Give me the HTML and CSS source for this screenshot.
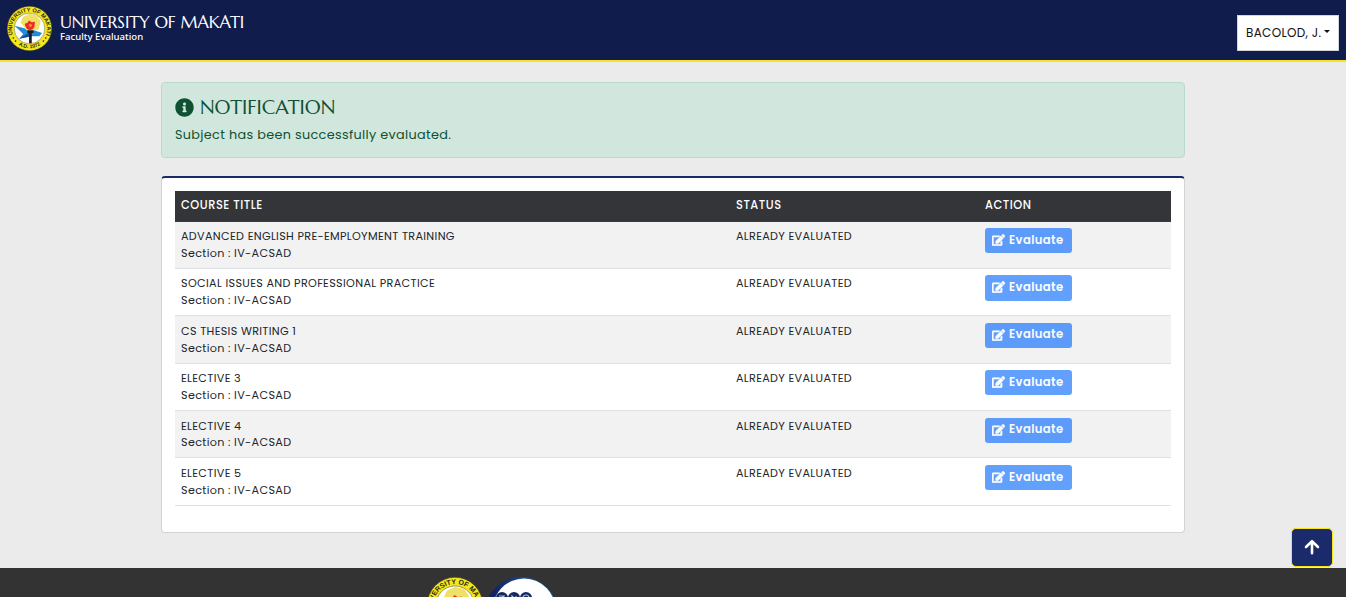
FILE: index.html
```
<!DOCTYPE html>
<html lang="en">
<head>
<meta charset="utf-8">
<title>Faculty Evaluation</title>
<link rel="stylesheet" href="styles.css">
</head>
<body>
<svg class="defs" width="0" height="0">
  <defs>
    <symbol id="seal" viewBox="0 0 100 100">
      <circle cx="50" cy="50" r="49.5" fill="#f4e71e" stroke="#3b3a20" stroke-width="1"/>
      <circle cx="50" cy="50" r="34" fill="#fff" stroke="#55511c" stroke-width="1"/>
      <path d="M30 36L36 24L50 18L66 21L75 34L70 52L47 58Z" fill="#f0e068"/>
      <path d="M17 44L40 50L50 60L60 54L78 60L72 67L54 67L27 73L36 62Z" fill="#218bd3"/>
      <path d="M27 73L54 56L54 67Z" fill="#124b9b"/>
      <path d="M41 45Q37 38 45 38L49 32L55 36L62 35L61 46Q58 54 52 53Q44 54 41 45Z" fill="#ee2b23"/>
      <circle cx="52" cy="43" r="3.500" fill="#f58a35"/>
      <path d="M45 54H59V60H55V83H49V60H45Z" fill="#171c22"/>
      <path id="sealTop" d="M13 64A39 39 0 1 1 87 64" fill="none"/>
      <path id="sealBottom" d="M20 82A44 44 0 0 0 80 82" fill="none"/>
      <text class="seal-text"><textPath href="#sealTop" textLength="148">UNIVERSITY OF MAKATI</textPath></text>
      <text class="seal-text seal-year" text-anchor="middle"><textPath href="#sealBottom" startOffset="50%">A.D. 1972</textPath></text>
      <circle cx="14" cy="71" r="1.8" fill="#222"/><circle cx="19" cy="78" r="1.8" fill="#222"/>
      <circle cx="86" cy="71" r="1.8" fill="#222"/><circle cx="81" cy="78" r="1.8" fill="#222"/>
    </symbol>
    <symbol id="edit" viewBox="0 0 576 512">
      <path fill="currentColor" stroke="currentColor" stroke-width="22" d="M402.600 83.200l90.200 90.200c3.800 3.800 3.800 10 0 13.800L274.400 405.600l-92.800 10.300c-12.400 1.400-22.900-9.100-21.500-21.500l10.300-92.800L388.800 83.200c3.800-3.800 10-3.800 13.800 0zm162-22.900l-48.800-48.800c-15.200-15.200-39.900-15.200-55.200 0l-35.400 35.400c-3.800 3.800-3.800 10 0 13.800l90.200 90.200c3.800 3.800 10 3.800 13.800 0l35.400-35.400c15.200-15.300 15.200-40 0-55.200zM384 346.200V448H64V128h229.800c3.200 0 6.200-1.300 8.500-3.500l40-40c7.600-7.600 2.200-20.500-8.500-20.500H48C21.500 64 0 85.500 0 112v352c0 26.500 21.500 48 48 48h352c26.500 0 48-21.500 48-48V306.200c0-10.700-12.900-16-20.500-8.500l-40 40c-2.200 2.300-3.500 5.300-3.500 8.500z"/>
    </symbol>
  </defs>
</svg>

<header class="topbar">
  <a class="brand">
    <svg class="brand-logo"><use href="#seal"/></svg>
    <span class="brand-text">
      <span class="brand-name">UNIVERSITY OF MAKATI</span>
      <span class="brand-sub">Faculty Evaluation</span>
    </span>
  </a>
  <button class="user-menu"><span>BACOLOD, J.</span><i class="caret"></i></button>
</header>

<main class="content">
  <section class="alert">
    <h1 class="alert-title">
      <svg class="alert-icon" viewBox="0 0 512 512"><path fill="currentColor" d="M256 8C119 8 8 119.100 8 256c0 137 111 248 248 248s248-111 248-248C504 119.100 393 8 256 8zm0 110c23.200 0 42 18.800 42 42s-18.800 42-42 42-42-18.800-42-42 18.800-42 42-42zm56 254c0 6.600-5.400 12-12 12h-88c-6.600 0-12-5.400-12-12v-24c0-6.600 5.400-12 12-12h12v-64h-12c-6.600 0-12-5.400-12-12v-24c0-6.600 5.400-12 12-12h64c6.600 0 12 5.400 12 12v100h12c6.600 0 12 5.400 12 12v24z"/></svg>
      <span>NOTIFICATION</span>
    </h1>
    <p class="alert-message">Subject has been successfully evaluated.</p>
  </section>

  <section class="card">
    <div class="row row-head"><span>COURSE TITLE</span><span>STATUS</span><span>ACTION</span></div>
    <div class="row"><div><div>ADVANCED ENGLISH PRE-EMPLOYMENT TRAINING</div><div>Section : IV-ACSAD</div></div><div>ALREADY EVALUATED</div><div><button class="evaluate"><svg><use href="#edit"/></svg><span>Evaluate</span></button></div></div>
    <div class="row"><div><div>SOCIAL ISSUES AND PROFESSIONAL PRACTICE</div><div>Section : IV-ACSAD</div></div><div>ALREADY EVALUATED</div><div><button class="evaluate"><svg><use href="#edit"/></svg><span>Evaluate</span></button></div></div>
    <div class="row"><div><div>CS THESIS WRITING 1</div><div>Section : IV-ACSAD</div></div><div>ALREADY EVALUATED</div><div><button class="evaluate"><svg><use href="#edit"/></svg><span>Evaluate</span></button></div></div>
    <div class="row"><div><div>ELECTIVE 3</div><div>Section : IV-ACSAD</div></div><div>ALREADY EVALUATED</div><div><button class="evaluate"><svg><use href="#edit"/></svg><span>Evaluate</span></button></div></div>
    <div class="row"><div><div>ELECTIVE 4</div><div>Section : IV-ACSAD</div></div><div>ALREADY EVALUATED</div><div><button class="evaluate"><svg><use href="#edit"/></svg><span>Evaluate</span></button></div></div>
    <div class="row"><div><div>ELECTIVE 5</div><div>Section : IV-ACSAD</div></div><div>ALREADY EVALUATED</div><div><button class="evaluate"><svg><use href="#edit"/></svg><span>Evaluate</span></button></div></div>
  </section>
</main>

<footer class="footer">
  <svg class="footer-seal"><use href="#seal"/></svg>
  <svg class="footer-badge" viewBox="0 0 72 72">
    <defs><linearGradient id="rim"><stop offset="0" stop-color="#101d55"/><stop offset=".45" stop-color="#1b3c83"/><stop offset="1" stop-color="#38a1e4"/></linearGradient></defs>
    <circle cx="36" cy="36" r="36" fill="url(#rim)"/>
    <ellipse cx="39" cy="35" rx="32" ry="33.500" fill="#fff"/>
    <g fill="#17275f"><circle cx="17" cy="21" r="6"/><circle cx="29" cy="21" r="6"/><circle cx="41" cy="21" r="6"/></g>
    <g fill="none" stroke="#b8c3dc" stroke-width="1.200"><path d="M14 19h5l-3 3M27 23v-4l4 4v-4"/><circle cx="41" cy="21" r="3"/></g>
  </svg>
</footer>

<button class="to-top" aria-label="Back to top">
  <svg viewBox="0 0 16 16"><path d="M8 14.200V2.500M2 8L8 2.200L14 8" fill="none" stroke="#fff" stroke-width="2.600" stroke-linecap="round" stroke-linejoin="round"/></svg>
</button>
</body>
</html>
```
FILE: styles.css
```
* { box-sizing: border-box; }
html, body { height: 100%; }
body {
  margin: 0;
  overflow: hidden;
  background: #ebebeb;
  color: #212529;
  font-family: Poppins, Inter, "Open Sans", sans-serif;
  font-size: 11.2px;
  letter-spacing: .33px;
}
button { font-family: inherit; margin: 0; letter-spacing: inherit; }
.defs { position: absolute; }
.seal-text { font: bold 12.5px "Liberation Sans", sans-serif; letter-spacing: 0; fill: #2c2b18; }
.seal-year { font-size: 11.5px; }

.topbar {
  display: flex;
  justify-content: space-between;
  height: 62px;
  padding: 6px 7px 0;
  background: #101c4c;
  border-bottom: 2px solid #f6e51d;
}
.brand { display: flex; gap: 8px; }
.brand-logo { width: 45px; height: 45px; }
.brand-text { display: flex; flex-direction: column; padding-top: 7px; color: #fff; white-space: nowrap; }
.brand-name { font: 16.8px/20px Marcellus, Lato, sans-serif; letter-spacing: -.1px; }
.brand-sub { font: 500 9.6px/8px "Noto Sans", sans-serif; letter-spacing: 0; }
.user-menu {
  display: flex;
  align-items: center;
  gap: 3px;
  width: 102px;
  height: 36px;
  margin-top: 9px;
  padding: 0 0 0 8px;
  background: #fff;
  border: 1px solid #d3d4d5;
  color: #111;
  font-size: 12px;
  white-space: nowrap;
}
.caret { margin-bottom: 3px; border: 3px solid transparent; border-top-color: #111; border-bottom: 0; }

.content { width: 1024px; height: 506px; margin: 0 auto; padding-top: 20px; }
.alert {
  height: 76px;
  padding: 13px 13px 0;
  background: #d1e7dd;
  border: 1px solid #badbcc;
  border-radius: 4px;
  color: #0f5132;
}
.alert-title {
  display: flex;
  align-items: center;
  gap: 6px;
  height: 22px;
  margin: 0 0 7px;
  font: 19.8px/22px Marcellus, Lato, sans-serif;
  letter-spacing: 0;
}
.alert-title span { padding-top: 2px; }
.alert-icon { width: 19px; height: 19px; }
.alert-message { margin: 0; font-size: 12.8px; line-height: 20px; letter-spacing: .33px; }

.card {
  height: 357px;
  margin-top: 18px;
  padding: 13px 13px 0;
  background: #fff;
  border: 1px solid #d3d3d3;
  border-top: 2px solid #1b2a6b;
  border-radius: 4px;
}
.row {
  display: grid;
  grid-template-columns: 555px 249px 1fr;
  height: 47.4px;
  padding: 6.5px 6px 0;
  border-bottom: 1px solid #dee2e6;
  line-height: 16.8px;
  white-space: nowrap;
}
.row:nth-child(even) { background: #f2f2f2; }
.row-head {
  height: 30.5px;
  padding-top: 5.6px;
  background: #343539;
  border-bottom-color: #3c3d41;
  color: #fff;
  font-size: 11.4px;
  font-weight: 500;
  letter-spacing: .53px;
}
.evaluate {
  display: flex;
  align-items: center;
  gap: 4px;
  width: 87px;
  height: 25.2px;
  padding: 0 0 1px 7px;
  background: #0d6efd;
  border: 0;
  border-radius: 3px;
  color: #fff;
  font-size: 11.6px;
  font-weight: 600;
  letter-spacing: .4px;
  opacity: .65;
}
.evaluate svg { width: 13px; height: 12px; overflow: visible; }

.footer { display: flex; gap: 4px; height: 29px; padding: 9px 0 0 427px; background: #333; overflow: hidden; }
.footer-seal { flex: none; width: 56px; height: 56px; }
.footer-badge { flex: none; width: 72px; height: 72px; margin-left: -2px; }
.to-top {
  position: absolute;
  right: 13px;
  bottom: 30px;
  display: grid;
  place-items: center;
  width: 42px;
  height: 39px;
  padding: 0 0 2px;
  background: #1b2a6b;
  border: 1px solid #f6e51d;
  border-radius: 5px;
}
.to-top svg { width: 16px; height: 16px; }
```
